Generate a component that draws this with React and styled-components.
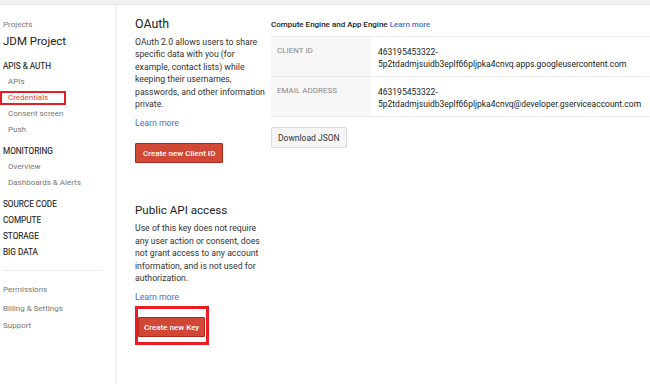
import React from 'react'
import styled, { createGlobalStyle } from 'styled-components'

const GlobalStyle = createGlobalStyle`
  html, body {
    margin: 0;
    padding: 0;
    background: #fff;
  }
  body {
    font-family: Roboto, "Liberation Sans", Arial, sans-serif;
    color: #222;
    width: 650px;
    height: 384px;
    overflow: hidden;
  }
`

const TopBar = styled.div`
  height: 4px;
  background: #f1f1f1;
  border-bottom: 1px solid #e5e5e5;
`

const Layout = styled.div`
  display: flex;
  height: 379px;
`

const Sidebar = styled.nav`
  width: 115px;
  flex: none;
  border-right: 2px solid #f1f1f1;
  padding-top: 12px;
  font-size: 8px;
`

const ProjectsLabel = styled.div`
  line-height: 16px;
  padding-left: 3px;
  color: #777;
`

const ProjectName = styled.div`
  line-height: 18px;
  margin-top: -1px;
  padding-left: 3px;
  font-size: 11.5px;
  color: #222;
`

const SectionTitle = styled.div`
  line-height: 16px;
  padding-left: 3px;
  margin-top: ${p => p.$gap ?? 5}px;
  font-size: 8.2px;
  color: #222;
  text-transform: uppercase;
  -webkit-text-stroke: 0.1px #222;
`

const NavItem = styled.div`
  line-height: 16px;
  padding-left: 8px;
  color: ${p => (p.$active ? '#dd4b39' : '#777')};
`

const Highlight = styled.span`
  display: inline-block;
  margin-left: -8px;
  padding-left: 6px;
  width: 56px;
  line-height: 10px;
  border: 2px solid #ec1c24;
`

const SideDivider = styled.div`
  height: 1px;
  margin: 10px 12px 0 3px;
  background: #eee;
`

const FootItem = styled.div`
  line-height: 16px;
  padding-left: 3px;
  margin-top: ${p => p.$gap}px;
  color: #777;
`

const Main = styled.main`
  display: flex;
  flex: 1;
  padding-left: 18px;
`

const InfoColumn = styled.section`
  width: 132px;
  flex: none;
  font-size: 8.7px;
  color: #333;
`

const Block = styled.div`
  padding-top: ${p => p.$top}px;
`

const Heading = styled.h2`
  margin: 0 0 3px;
  font-size: ${p => p.$size || 12}px;
  font-weight: 400;
  line-height: 18px;
  color: #222;
`

const Para = styled.p`
  margin: 0;
  line-height: 12.4px;
`

const Link = styled.a`
  display: block;
  color: #4272db;
  text-decoration: none;
  line-height: 12px;
  margin-top: ${p => p.$gap}px;
`

const RedButton = styled.button`
  display: block;
  height: 20px;
  padding: 0 ${p => p.$pad || 7}px;
  background: #d14836;
  border: 1px solid #b0281a;
  border-radius: 1px;
  color: #fff;
  font-family: inherit;
  font-size: 8px;
  font-weight: 500;
  margin-top: ${p => p.$gap || 0}px;
`

const AnnotationBox = styled.div`
  display: inline-block;
  margin-top: 3px;
  padding: 8px 1px 5px 0;
  border: 3px solid #ec1c24;
`

const CredsColumn = styled.section`
  flex: 1;
  padding-left: 4px;
  padding-top: 14px;
  font-size: 8.5px;
`

const CredsTitle = styled.div`
  line-height: 12px;
  font-size: 8px;
  font-weight: 500;
  color: #222;

  a {
    color: #4272db;
    text-decoration: none;
  }
`

const Table = styled.div`
  margin-top: 5px;
  border-top: 1px solid #ebebeb;
`

const Row = styled.div`
  display: flex;
  height: 39px;
  border-bottom: 1px solid #ebebeb;
`

const Label = styled.div`
  width: 94px;
  flex: none;
  padding: 8px 0 0 6px;
  background: #f7f7f7;
  color: #888;
  font-size: 8px;
  line-height: 12px;
`

const Value = styled.div`
  padding: 9px 0 0 7px;
  color: #222;
  line-height: 12px;
  white-space: nowrap;
`

const GrayButton = styled.button`
  display: block;
  margin-top: 10px;
  height: 21px;
  padding: 0 6px;
  background: #f5f5f5;
  border: 1px solid #dcdcdc;
  border-radius: 2px;
  color: #333;
  font-family: inherit;
  font-size: 8.5px;
`

export default function App() {
  return (
    <>
      <GlobalStyle />
      <TopBar />
      <Layout>
        <Sidebar>
          <ProjectsLabel>Projects</ProjectsLabel>
          <ProjectName>JDM Project</ProjectName>
          <SectionTitle $gap={8}>APIs &amp; auth</SectionTitle>
          <NavItem>APIs</NavItem>
          <NavItem $active>
            <Highlight>Credentials</Highlight>
          </NavItem>
          <NavItem>Consent screen</NavItem>
          <NavItem>Push</NavItem>
          <SectionTitle>Monitoring</SectionTitle>
          <NavItem>Overview</NavItem>
          <NavItem>Dashboards &amp; Alerts</NavItem>
          <SectionTitle>Source code</SectionTitle>
          <SectionTitle $gap={0}>Compute</SectionTitle>
          <SectionTitle $gap={0}>Storage</SectionTitle>
          <SectionTitle $gap={0}>Big data</SectionTitle>
          <SideDivider />
          <FootItem $gap={11}>Permissions</FootItem>
          <FootItem $gap={3}>Billing &amp; Settings</FootItem>
          <FootItem $gap={1}>Support</FootItem>
        </Sidebar>
        <Main>
          <InfoColumn>
            <Block $top={10}>
              <Heading $size={12.4}>OAuth</Heading>
              <Para>
                OAuth 2.0 allows users to share specific data with you (for
                example, contact lists) while keeping their usernames,
                passwords, and other information private.
              </Para>
              <Link href="#" $gap={7}>Learn more</Link>
              <RedButton $gap={14}>Create new Client ID</RedButton>
            </Block>
            <Block $top={38}>
              <Heading $size={11.6}>Public API access</Heading>
              <Para>
                Use of this key does not require any user action or consent,
                does not grant access to any account information, and is not
                used for authorization.
              </Para>
              <Link href="#" $gap={7}>Learn more</Link>
              <AnnotationBox>
                <RedButton $pad={5}>Create new Key</RedButton>
              </AnnotationBox>
            </Block>
          </InfoColumn>
          <CredsColumn>
            <CredsTitle>
              Compute Engine and App Engine <a href="#">Learn more</a>
            </CredsTitle>
            <Table>
              <Row>
                <Label>CLIENT ID</Label>
                <Value>
                  463195453322-
                  <br />
                  5p2tdadmjsuidb3eplf66pljpka4cnvq.apps.googleusercontent.com
                </Value>
              </Row>
              <Row>
                <Label>EMAIL ADDRESS</Label>
                <Value>
                  463195453322-
                  <br />
                  5p2tdadmjsuidb3eplf66pljpka4cnvq@developer.gserviceaccount.com
                </Value>
              </Row>
            </Table>
            <GrayButton>Download JSON</GrayButton>
          </CredsColumn>
        </Main>
      </Layout>
    </>
  )
}
